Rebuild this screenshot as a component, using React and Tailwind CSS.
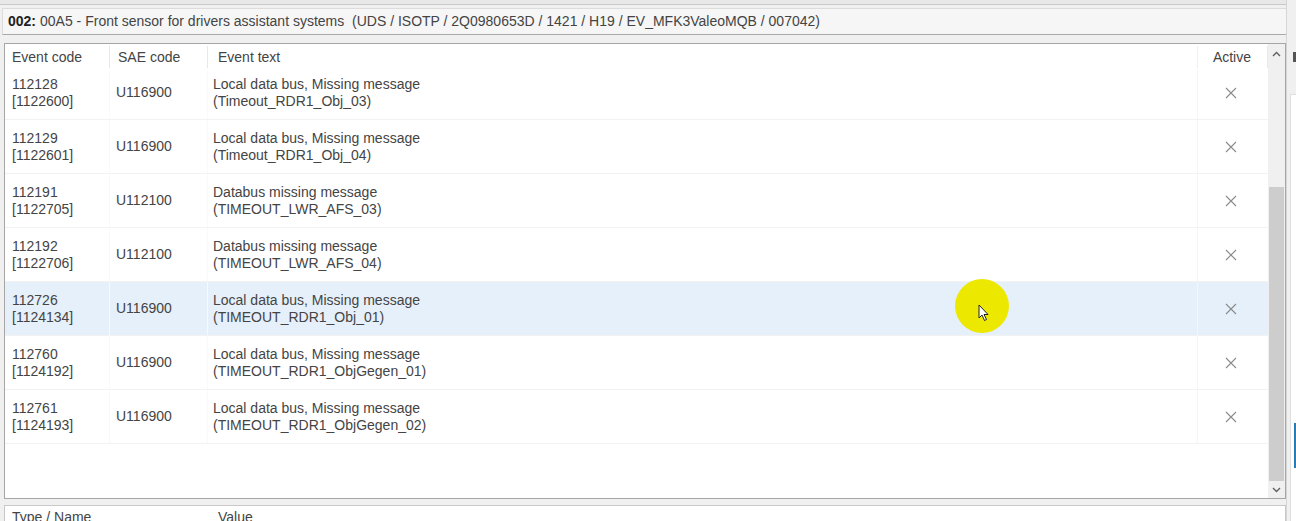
import React from "react";

const rows = [
  { code: "112128", sub: "[1122600]", sae: "U116900", t1: "Local data bus, Missing message", t2: "(Timeout_RDR1_Obj_03)" },
  { code: "112129", sub: "[1122601]", sae: "U116900", t1: "Local data bus, Missing message", t2: "(Timeout_RDR1_Obj_04)" },
  { code: "112191", sub: "[1122705]", sae: "U112100", t1: "Databus missing message", t2: "(TIMEOUT_LWR_AFS_03)" },
  { code: "112192", sub: "[1122706]", sae: "U112100", t1: "Databus missing message", t2: "(TIMEOUT_LWR_AFS_04)" },
  { code: "112726", sub: "[1124134]", sae: "U116900", t1: "Local data bus, Missing message", t2: "(TIMEOUT_RDR1_Obj_01)", sel: true },
  { code: "112760", sub: "[1124192]", sae: "U116900", t1: "Local data bus, Missing message", t2: "(TIMEOUT_RDR1_ObjGegen_01)" },
  { code: "112761", sub: "[1124193]", sae: "U116900", t1: "Local data bus, Missing message", t2: "(TIMEOUT_RDR1_ObjGegen_02)" },
];

function Cross() {
  return (
    <svg width="12" height="12" viewBox="0 0 12 12">
      <path d="M1 1 L11 11 M11 1 L1 11" stroke="#8a8a8a" strokeWidth="1.1" fill="none" />
    </svg>
  );
}

function Row({ r }) {
  return (
    <div className={`flex h-[54px] shrink-0 border-b border-[#f2f2f2] ${r.sel ? "bg-[#e6f0fa]" : "bg-white"}`}>
      <div className="w-[105px] pl-[7px] flex flex-col justify-center leading-[17px] border-r border-[#f9f9f9]">
        <span>{r.code}</span>
        <span>{r.sub}</span>
      </div>
      <div className="w-[98px] pl-[6px] flex items-center border-r border-[#f9f9f9]">{r.sae}</div>
      <div className="flex-1 pl-[5px] flex flex-col justify-center leading-[17px] border-r border-[#f6f6f6]">
        <span>{r.t1}</span>
        <span>{r.t2}</span>
      </div>
      <div className="w-[70px] flex items-center justify-center pr-[4px]">
        <Cross />
      </div>
    </div>
  );
}

export default function App() {
  return (
    <div
      className="w-[1296px] h-[521px] overflow-hidden bg-[#f0f0f0] flex text-[14px] text-[#444]"
      style={{ fontFamily: "'Liberation Sans', Arial, sans-serif" }}
    >
      <div className="w-[1286px] flex flex-col">
        {/* top strip */}
        <div className="h-[5px] shrink-0 bg-[#e8e8e8] border-b border-[#c9c9c9]" />
        {/* title bar */}
        <div className="mt-[3px] ml-[2px] h-[27px] shrink-0 bg-[#f6f6f6] border-t border-l border-[#dcdcdc] border-b border-b-[#a9a9a9] flex items-center pl-[5px]">
          <span className="font-bold text-[#222]">002:</span>
          <span className="ml-[4px]">00A5 - Front sensor for drivers assistant systems&nbsp; (UDS / ISOTP / 2Q0980653D / 1421 / H19 / EV_MFK3ValeoMQB / 007042)</span>
        </div>
        {/* table */}
        <div className="mt-[8px] ml-[4px] h-[456px] shrink-0 bg-white border border-[#a6a6a6] flex relative">
          <div className="flex-1 flex flex-col">
            <div className="h-[26px] shrink-0 flex items-center bg-white">
              <div className="w-[105px] pl-[7px] h-[22px] flex items-center border-r border-[#e8e8e8]">Event code</div>
              <div className="w-[98px] pl-[8px] h-[22px] flex items-center border-r border-[#e8e8e8]">SAE code</div>
              <div className="flex-1 pl-[10px] h-[22px] flex items-center border-r border-[#f0f0f0]">Event text</div>
              <div className="w-[70px] h-[22px] flex items-center justify-end pr-[16px] border-r border-[#e8e8e8]">Active</div>
            </div>
            <div className="flex-1 overflow-hidden">
              <div className="-mt-[4px] flex flex-col">
                {rows.map((r) => (
                  <Row key={r.code} r={r} />
                ))}
              </div>
            </div>
          </div>
          {/* scrollbar */}
          <div className="w-[17px] shrink-0 bg-[#f0f0f0] flex flex-col items-center">
            <div className="h-[20px] flex items-center justify-center">
              <svg width="9" height="6" viewBox="0 0 9 6">
                <path d="M1 5 L4.5 1.5 L8 5" stroke="#606060" strokeWidth="1.4" fill="none" />
              </svg>
            </div>
            <div className="h-[123px]" />
            <div className="w-[15px] flex-1 bg-[#cdcdcd]" />
            <div className="h-[17px] flex items-center justify-center">
              <svg width="9" height="6" viewBox="0 0 9 6">
                <path d="M1 1 L4.5 4.5 L8 1" stroke="#606060" strokeWidth="1.4" fill="none" />
              </svg>
            </div>
          </div>
          {/* cursor highlight */}
          <div className="absolute left-[950px] top-[235px] w-[54px] h-[54px] rounded-full bg-[#ece800]" />
          <svg className="absolute left-[973px] top-[260px]" width="12" height="18" viewBox="0 0 12 18">
            <path d="M1 1 L1 14 L4 11 L6.5 16.5 L8.5 15.5 L6 10.5 L10 10.5 Z" fill="#fff" stroke="#222" strokeWidth="1" strokeLinejoin="round" />
          </svg>
        </div>
        {/* bottom panel */}
        <div className="mt-[6px] ml-[4px] flex-1 bg-white border border-[#c8c8c8] flex items-start pt-[3px] leading-[16px]">
          <div className="w-[203px] pl-[7px]">Type / Name</div>
          <div className="pl-[10px]">Value</div>
        </div>
      </div>
      {/* right strip */}
      <div className="flex-1 flex flex-col border-l border-[#d6d6d6]">
        <div className="h-[52px]" />
        <div className="ml-[6px] w-[3px] h-[10px] bg-[#555]" />
        <div className="h-[32px]" />
        <div className="ml-[3px] flex-1 bg-white border-l border-t border-[#dedede] flex flex-col">
          <div className="h-[328px]" />
          <div className="ml-auto w-[2px] h-[45px] bg-[#2a7ab8]" />
        </div>
      </div>
    </div>
  );
}
